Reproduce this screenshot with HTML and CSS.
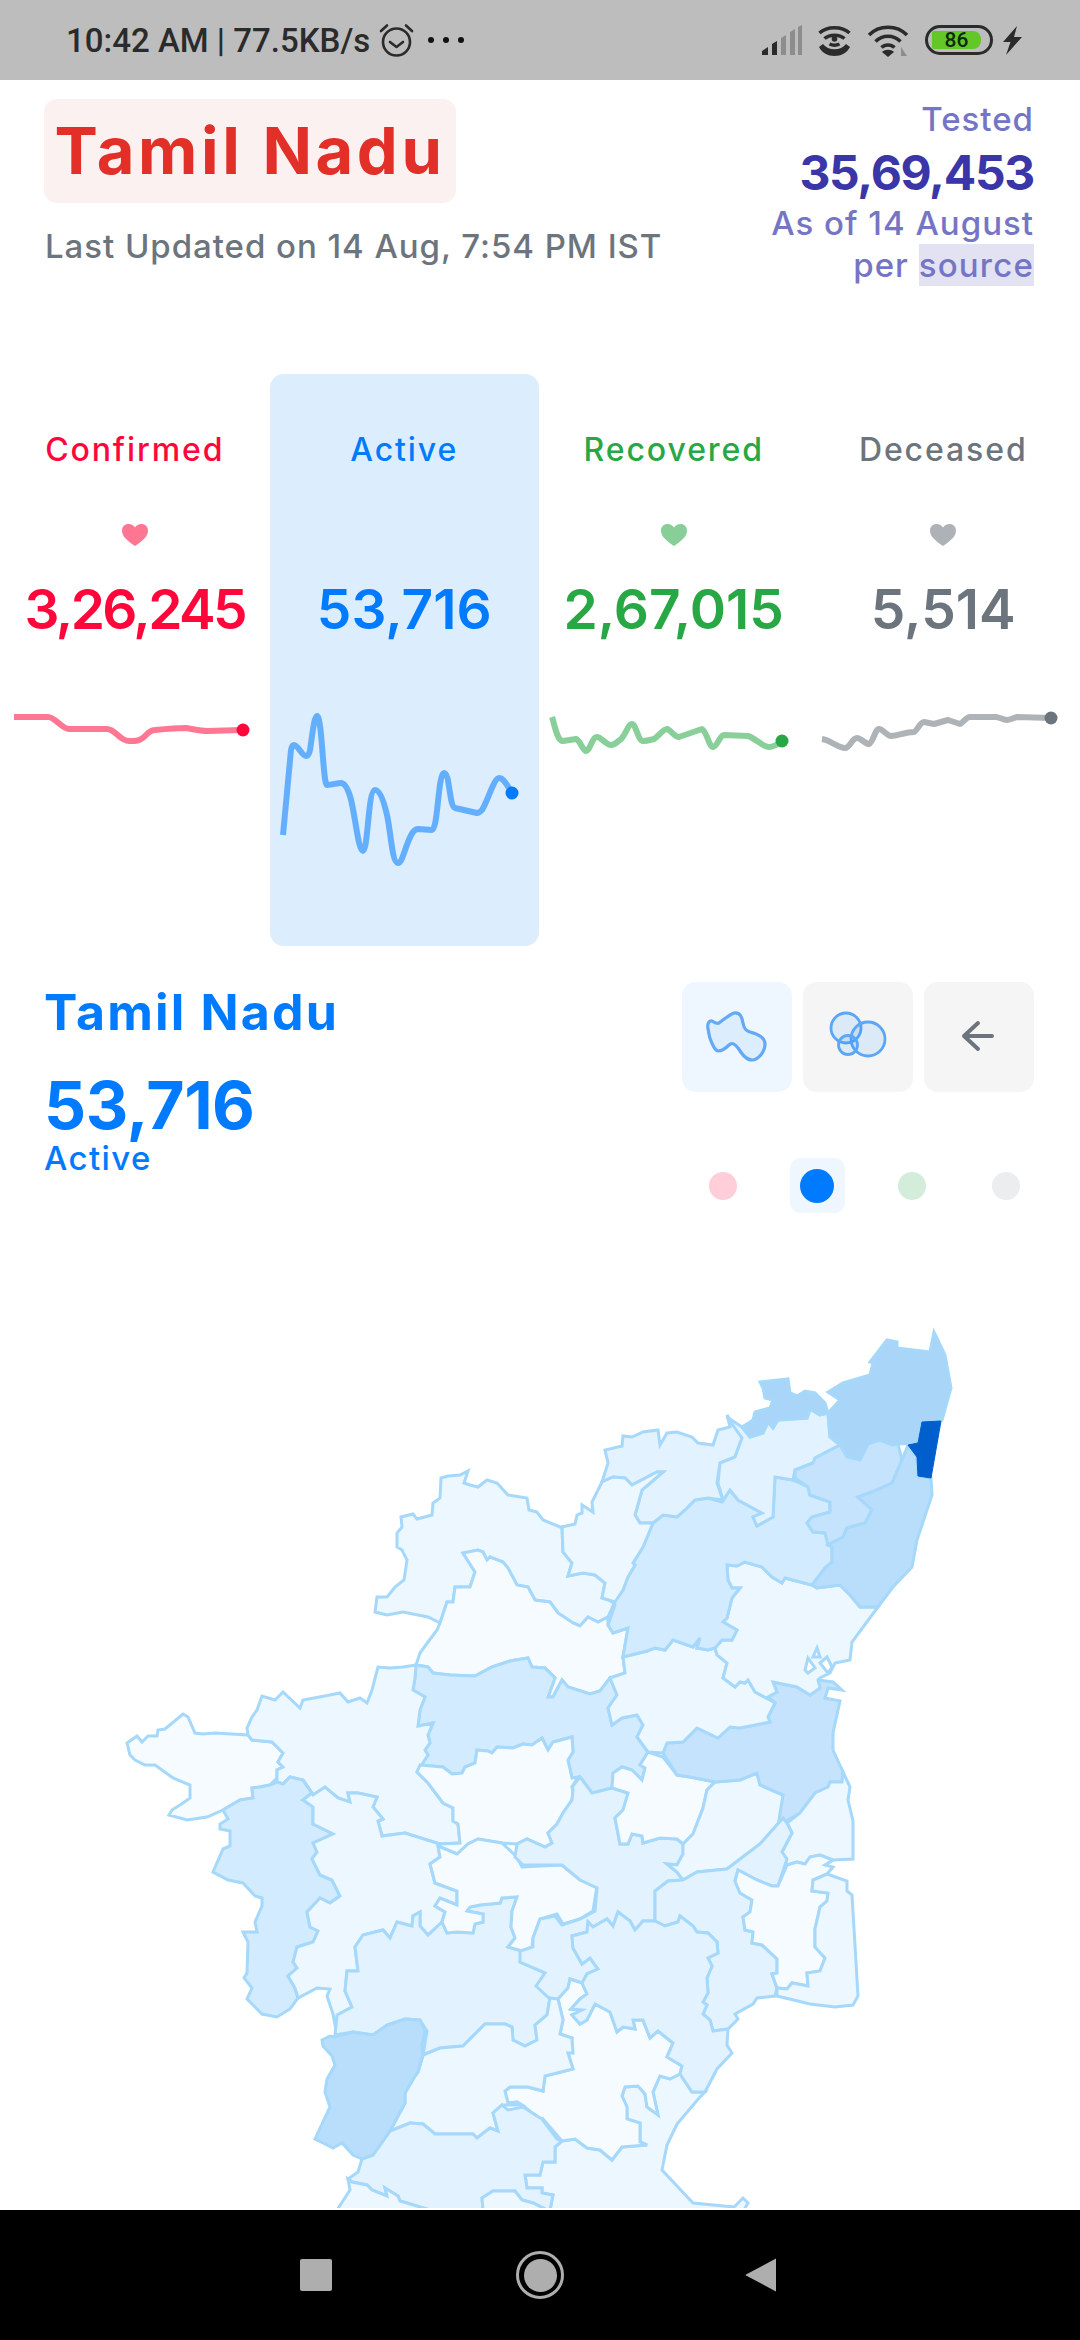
FILE: index.html
```html
<!DOCTYPE html>
<html lang="en">
<head>
<meta charset="utf-8">
<title>Tamil Nadu</title>
<link rel="stylesheet" href="styles.css">
</head>
<body>
<div class="phone">
  <header class="status">
    <div class="status-left">
      <span class="clock">10:42 AM | 77.5KB/s</span>
      <svg class="ico-alarm" viewBox="0 0 35 34"><circle cx="17.500" cy="19" r="13.500"/><path d="M11 19l6.500 5 6.500-5M2 8l6-5.500M33 8l-6-5.500"/></svg>
      <span class="more"><i></i><i></i><i></i></span>
    </div>
    <div class="status-right">
      <svg class="ico-signal" viewBox="0 0 40 30"><path class="on" d="M0 30v-4l6-4v8zM10 30v-11l5-3v14z"/><path class="off" d="M19 30V13l5-3v20zM28 30V7l5-3v26zM36 30V2l4-2v30z"/></svg>
      <svg class="ico-hotspot" viewBox="0 0 33 31"><circle cx="16.500" cy="14" r="2.800"/><path class="ln" d="M1.500 8C9 1 24 1 31.500 8M6.500 13.500c5-4.500 15-4.500 20 0"/><path class="ln" d="M11.500 19c3 1.500 7 1.500 10 0"/><path d="M1 22l4-3c5 7 18 7 23 0l4 3c-3 6-9 9-15.500 9S4 28 1 22z"/></svg>
      <svg class="ico-wifi" viewBox="0 0 42 33"><path class="ln" d="M2 11c10-10.500 28-10.500 38 0M8.500 17.500c7-7 18-7 25 0M14.500 23.500c3.500-3.500 9.500-3.500 13 0"/><path d="M21 33l-6-5c3-3 9-3 12 0z"/><path class="dim" d="M34 32v-9l6 9z"/></svg>
      <span class="battery"><span class="level">86</span></span>
      <svg class="ico-bolt" viewBox="0 0 19 29"><path d="M14 0L0 16h7.500L3 29l16-18h-8z"/></svg>
    </div>
  </header>

  <section class="top">
    <div class="place">
      <h1 class="place-name">Tamil Nadu</h1>
      <p class="updated">Last Updated on 14 Aug, 7:54 PM IST</p>
    </div>
    <div class="tested">
      <div class="tested-label">Tested</div>
      <div class="tested-value">35,69,453</div>
      <div class="tested-note">As of 14 August</div>
      <div class="tested-note">per <span class="source">source</span></div>
    </div>
  </section>

  <section class="stats">
    <div class="stat confirmed">
      <div class="stat-label">Confirmed</div>
      <svg class="heart" viewBox="0 0 26 22"><path d="M13 22C6 17 0 13 0 6.500 0 2.500 3 0 6.500 0 9.500 0 11.500 1.500 13 3.500 14.500 1.500 16.500 0 19.500 0 23 0 26 2.500 26 6.500 26 13 20 17 13 22z"/></svg>
      <div class="stat-value">3,26,245</div>
    </div>
    <div class="stat active">
      <div class="stat-label">Active</div>
      <svg class="heart" viewBox="0 0 26 22"><path d="M13 22C6 17 0 13 0 6.500 0 2.500 3 0 6.500 0 9.500 0 11.500 1.500 13 3.500 14.500 1.500 16.500 0 19.500 0 23 0 26 2.500 26 6.500 26 13 20 17 13 22z" class="hidden-heart"/></svg>
      <div class="stat-value">53,716</div>
    </div>
    <div class="stat recovered">
      <div class="stat-label">Recovered</div>
      <svg class="heart" viewBox="0 0 26 22"><path d="M13 22C6 17 0 13 0 6.500 0 2.500 3 0 6.500 0 9.500 0 11.500 1.500 13 3.500 14.500 1.500 16.500 0 19.500 0 23 0 26 2.500 26 6.500 26 13 20 17 13 22z"/></svg>
      <div class="stat-value">2,67,015</div>
    </div>
    <div class="stat deceased">
      <div class="stat-label">Deceased</div>
      <svg class="heart" viewBox="0 0 26 22"><path d="M13 22C6 17 0 13 0 6.500 0 2.500 3 0 6.500 0 9.500 0 11.500 1.500 13 3.500 14.500 1.500 16.500 0 19.500 0 23 0 26 2.500 26 6.500 26 13 20 17 13 22z"/></svg>
      <div class="stat-value">5,514</div>
    </div>
    <svg class="sparks" viewBox="0 700 1080 180">
      <g class="spark s-confirmed">
        <path d="M14 717L48 717C55 717 62 729 69 729L107 729C115 729 120 741 129 741C136 741 138 741 141 739C146 737 148 730 155 730C165 729 176 728 186 728C193 729 200 731 207 731L243 730"/>
        <circle cx="243" cy="730" r="6.500"/>
      </g>
      <g class="spark s-active">
        <path d="M283 835L291 750C292 745 293 745 294 745C298 745 302 756 306 756C308 756 309 755 310 750C312 738 314 716 317 716C322 716 323 785 327 785C332 785 337 783 341 783C345 783 348 790 350 796C355 812 358 851 363 851C368 851 368 790 375 790C380 790 384 802 387 815C391 833 392 863 398 863C404 863 408 829 418 829L432 830C438 830 438 773 444 773C450 773 449 806 455 808L477 813C479 813 480 812 482 810C487 803 494 778 499 778C504 778 508 787 512 793"/>
        <circle cx="512" cy="793" r="6.500"/>
      </g>
      <g class="spark s-recovered">
        <path d="M552 717C555 726 557 741 563 741L576 739C580 740 583 751 586 751C590 751 592 737 597 737C601 737 606 745 611 745C615 745 618 741 621 739C625 736 628 724 632 724C636 724 638 741 643 741C647 741 650 740 654 739C658 737 663 729 667 729C671 730 674 737 679 737L702 729C707 732 709 747 713 747C717 747 720 735 724 735L748 736C755 738 763 747 769 747C773 747 777 745 782 741"/>
        <circle cx="782" cy="741" r="6.500"/>
      </g>
      <g class="spark s-deceased">
        <path d="M822 739C830 740 838 748 845 748C850 748 852 738 857 738C861 738 865 744 869 744C873 743 875 729 879 729C883 729 887 736 891 736C898 736 905 732 914 732C917 731 920 722 924 722L934 724L948 720L960 724C963 723 966 717 970 717L996 717C999 717 1003 720 1007 720C1010 720 1013 718 1017 717L1051 718"/>
        <circle cx="1051" cy="718" r="6.500"/>
      </g>
    </svg>
  </section>

  <section class="region">
    <div class="region-text">
      <h2 class="region-name">Tamil Nadu</h2>
      <div class="region-value">53,716</div>
      <div class="region-type">Active</div>
    </div>
    <div class="controls">
      <div class="buttons">
        <div class="btn btn-on">
          <svg viewBox="0 0 110 110"><path class="blob" d="M26 47C25 42 27 38 30 39C33 41 35 42 37 41C41 38 47 33 52 31C58 30 60 35 61 41C62 47 64 49 68 50C76 52 83 55 83 62C83 70 76 78 70 78C64 78 60 72 56 66C53 62 50 60 47 63C43 67 39 69 36 69C32 68 31 63 29 59C27 55 27 51 26 47z"/></svg>
        </div>
        <div class="btn">
          <svg viewBox="0 0 110 110"><circle class="ring" cx="43" cy="46" r="15"/><circle class="ring" cx="65" cy="57" r="17"/><circle class="ring" cx="45" cy="63" r="9.500"/></svg>
        </div>
        <div class="btn">
          <svg viewBox="0 0 110 110"><path class="arrow" d="M40 54H68M54 41L40 54L54 67"/></svg>
        </div>
      </div>
      <div class="dots">
        <span class="dot-cell"><i class="dot dot-pink"></i></span>
        <span class="dot-cell dot-cell-on"><i class="dot dot-blue"></i></span>
        <span class="dot-cell"><i class="dot dot-green"></i></span>
        <span class="dot-cell"><i class="dot dot-grey"></i></span>
      </div>
    </div>
  </section>

  <svg class="map" viewBox="0 1300 1080 908">
    <polygon class="d1" points="375,1612 377,1597 387,1597 395,1587 404,1580 407,1560 402,1550 397,1547 397,1533 402,1527 401,1517 413,1514 417,1519 432,1515 433,1503 440,1498 441,1478 448,1476 460,1475 468,1471 464,1483 470,1485 478,1487 487,1480 497,1483 508,1495 527,1498 529,1510 537,1512 543,1520 560,1527 562,1527 563,1552 572,1563 568,1576 583,1573 595,1575 605,1583 602,1598 615,1602 608,1617 598,1622 588,1617 580,1626 573,1623 558,1613 550,1602 535,1600 528,1587 517,1585 508,1568 503,1562 490,1557 487,1560 483,1552 478,1550 463,1553 475,1572 470,1587 455,1587 453,1602 447,1602 440,1623 428,1617 403,1612 387,1615"/>
    <polygon class="d0" points="440,1623 447,1602 453,1602 455,1587 470,1587 475,1572 463,1553 478,1550 483,1552 487,1560 490,1557 503,1562 508,1568 517,1585 528,1587 535,1600 550,1602 558,1613 573,1623 580,1626 588,1617 598,1622 608,1617 608,1625 613,1633 628,1628 623,1657 625,1673 610,1678 600,1691 590,1694 568,1687 562,1680 553,1697 548,1697 555,1678 545,1668 532,1667 528,1658 510,1661 492,1667 475,1676 450,1675 433,1673 428,1667 416,1665 420,1653 428,1642 437,1630"/>
    <polygon class="d3" points="416,1665 428,1667 433,1673 450,1675 475,1676 492,1667 510,1661 528,1658 532,1667 545,1668 555,1678 548,1697 553,1697 562,1680 568,1687 590,1694 600,1691 610,1678 617,1695 608,1708 612,1725 622,1718 637,1715 643,1725 637,1737 648,1752 640,1765 645,1768 642,1780 632,1770 622,1767 613,1773 612,1788 592,1793 580,1777 572,1778 568,1760 573,1752 572,1737 553,1742 548,1750 542,1738 532,1745 523,1744 513,1748 497,1747 492,1753 488,1751 477,1750 475,1763 465,1767 462,1773 452,1774 443,1767 420,1765 428,1755 425,1750 430,1743 428,1735 433,1723 418,1726 420,1710 425,1697 413,1690 415,1678"/>
    <polygon class="d0" points="127,1743 137,1736 142,1742 148,1736 157,1736 158,1730 165,1729 183,1714 188,1717 195,1733 203,1734 215,1733 248,1735 252,1740 272,1742 283,1753 278,1762 283,1767 277,1770 277,1778 270,1785 260,1787 252,1788 253,1798 240,1800 223,1810 207,1817 187,1820 169,1815 172,1810 183,1803 190,1798 190,1785 173,1778 155,1765 145,1765 135,1760 130,1755"/>
    <polygon class="d1" points="248,1735 247,1728 252,1717 257,1710 262,1696 275,1700 283,1692 300,1708 303,1700 330,1695 340,1693 348,1702 360,1698 367,1703 372,1690 378,1667 390,1668 403,1667 416,1665 415,1678 413,1690 425,1697 420,1710 418,1726 433,1723 428,1735 430,1743 425,1750 428,1755 417,1772 428,1783 443,1803 453,1808 453,1821 458,1824 460,1843 440,1844 405,1833 382,1836 378,1821 383,1819 373,1807 377,1797 358,1793 348,1793 350,1802 338,1798 325,1787 313,1795 303,1780 290,1777 283,1784 277,1782 277,1770 283,1767 278,1762 283,1753 272,1742 252,1740"/>
    <polygon class="d0" points="420,1765 443,1767 452,1774 462,1773 465,1767 475,1763 477,1750 488,1751 492,1753 497,1747 513,1748 523,1744 532,1745 542,1738 548,1750 553,1742 572,1737 573,1752 568,1760 572,1778 578,1777 572,1787 573,1790 572,1800 563,1813 557,1824 548,1833 552,1843 545,1847 527,1839 517,1844 502,1843 478,1839 468,1844 457,1854 438,1846 440,1844 460,1843 458,1824 453,1821 453,1808 443,1803 428,1783 417,1772"/>
    <polygon class="d3" points="223,1810 228,1819 220,1824 220,1829 230,1831 230,1846 223,1849 213,1872 228,1880 243,1883 255,1896 262,1898 262,1906 255,1922 257,1932 243,1932 248,1942 247,1973 244,1978 252,1988 247,1999 262,2014 277,2017 290,2009 298,1998 295,1988 288,1976 297,1968 293,1962 297,1947 313,1942 318,1931 310,1927 307,1912 320,1898 330,1903 340,1896 332,1880 320,1875 312,1859 317,1852 313,1843 333,1834 313,1824 313,1807 313,1803 303,1800 312,1793 303,1780 290,1777 283,1784 277,1782 270,1785 260,1787 252,1788 253,1798 240,1800"/>
    <polygon class="d1" points="303,1780 313,1795 325,1787 338,1798 350,1802 348,1793 358,1793 377,1797 373,1807 383,1819 378,1821 382,1836 405,1833 440,1844 438,1846 440,1857 430,1864 435,1883 457,1891 457,1905 440,1898 435,1906 445,1912 442,1922 428,1935 420,1926 420,1912 413,1916 412,1926 397,1922 390,1938 383,1930 363,1935 355,1947 358,1971 347,1971 345,1991 352,2007 340,2014 337,2035 333,2014 327,1996 330,1989 317,1988 298,1998 295,1988 288,1976 297,1968 293,1962 297,1947 313,1942 318,1931 310,1927 307,1912 320,1898 330,1903 340,1896 332,1880 320,1875 312,1859 317,1852 313,1843 333,1834 313,1824 313,1807 303,1800 312,1793"/>
    <polygon class="d2" points="355,1947 363,1935 383,1930 390,1938 397,1922 412,1926 413,1916 420,1912 420,1926 428,1935 442,1922 447,1933 457,1932 473,1933 475,1924 483,1922 483,1914 467,1911 470,1907 480,1905 500,1903 502,1898 517,1897 512,1911 511,1927 515,1938 508,1947 522,1951 520,1962 545,1973 537,1986 550,1998 547,2015 535,2025 537,2040 525,2046 513,2040 512,2027 505,2024 485,2024 463,2046 440,2048 423,2055 427,2031 420,2020 405,2019 387,2025 373,2035 353,2032 335,2035 337,2015 352,2007 345,1991 347,1971 358,1971"/>
    <polygon class="d0" points="438,1846 457,1854 468,1844 478,1839 502,1843 517,1857 522,1867 562,1865 580,1880 597,1886 593,1911 580,1919 563,1924 557,1914 540,1919 533,1938 532,1947 522,1951 508,1947 515,1938 511,1927 512,1911 517,1897 502,1898 500,1903 480,1905 470,1907 467,1911 483,1914 483,1922 475,1924 473,1933 457,1932 447,1933 442,1922 445,1912 435,1906 440,1898 457,1905 457,1891 435,1883 430,1864 440,1857"/>
    <polygon class="d2" points="580,1777 572,1787 573,1790 572,1800 563,1813 557,1824 548,1833 552,1843 545,1847 527,1839 517,1844 515,1857 523,1865 562,1865 580,1880 597,1888 595,1911 580,1919 562,1925 555,1916 540,1919 533,1938 533,1947 520,1951 520,1962 545,1973 536,1986 550,1999 558,1999 568,1988 570,1979 582,1983 587,1974 598,1969 590,1958 582,1964 573,1948 572,1936 587,1932 588,1922 593,1927 607,1919 613,1926 618,1912 630,1921 635,1930 643,1921 655,1921 655,1891 668,1881 683,1880 677,1872 667,1864 677,1865 683,1854 683,1844 677,1839 660,1838 643,1843 642,1836 632,1834 628,1844 620,1844 615,1818 623,1810 628,1800 628,1793 612,1788 592,1793"/>
    <polygon class="d0" points="648,1752 663,1757 677,1775 690,1777 715,1782 707,1790 703,1808 693,1834 683,1844 677,1839 660,1838 643,1843 642,1836 632,1834 628,1844 620,1844 615,1818 623,1810 628,1793 612,1788 613,1773 622,1767 632,1770 642,1780 645,1768 640,1765"/>
    <polygon class="d1" points="683,1854 677,1865 667,1864 677,1872 683,1880 697,1872 727,1869 760,1844 783,1818 783,1795 760,1785 757,1773 740,1780 715,1782 707,1790 703,1808 693,1834 683,1844"/>
    <polygon class="d4" points="663,1753 667,1743 683,1742 697,1728 718,1738 730,1727 740,1728 770,1722 768,1717 775,1703 768,1697 777,1692 773,1682 797,1687 810,1695 820,1688 818,1680 833,1682 842,1690 828,1688 825,1698 840,1701 833,1733 833,1750 843,1772 842,1782 830,1782 828,1787 815,1793 800,1813 778,1826 783,1795 760,1785 757,1773 740,1780 715,1782 690,1777 677,1775"/>
    <polygon class="d1" points="623,1657 647,1651 655,1648 665,1650 673,1640 693,1647 700,1638 697,1648 708,1650 715,1648 717,1655 727,1663 723,1678 735,1687 740,1682 745,1683 748,1680 755,1692 770,1700 775,1703 768,1717 770,1722 740,1728 730,1727 718,1738 697,1728 683,1742 667,1743 663,1753 648,1752 637,1737 643,1725 637,1715 622,1718 612,1725 608,1708 617,1695 610,1678 625,1673"/>
    <polygon class="d1" points="737,1630 723,1622 727,1618 732,1598 740,1588 732,1588 728,1580 727,1565 737,1566 745,1562 762,1567 772,1577 782,1583 785,1578 812,1585 817,1588 840,1585 850,1595 860,1607 878,1607 852,1642 850,1660 835,1663 830,1673 820,1678 818,1680 820,1688 810,1695 797,1687 773,1682 777,1692 768,1697 770,1700 755,1692 748,1680 745,1683 740,1682 735,1687 723,1678 727,1663 717,1655 715,1648 722,1640 732,1640"/>
    <polygon class="hole" points="817,1648 820,1657 813,1657"/>
    <polygon class="hole" points="827,1657 832,1667 828,1673 820,1663"/>
    <polygon class="hole" points="808,1658 815,1668 808,1673 805,1670"/>
    <polygon class="d3" points="653,1523 663,1515 677,1517 685,1510 695,1500 708,1498 722,1502 730,1490 738,1500 762,1513 753,1517 757,1526 773,1517 775,1477 793,1480 808,1487 810,1495 830,1502 830,1512 812,1517 807,1523 813,1532 825,1533 832,1547 832,1562 825,1568 812,1585 785,1578 782,1583 772,1577 762,1567 745,1562 737,1566 727,1565 728,1580 732,1588 740,1588 732,1598 727,1618 723,1622 737,1630 732,1640 722,1640 715,1648 708,1650 697,1648 700,1638 693,1647 673,1640 665,1650 655,1648 647,1651 623,1657 628,1628 613,1633 608,1625 615,1605 612,1602 623,1590 628,1577 635,1565 633,1563 643,1547"/>
    <polygon class="d2" points="602,1482 608,1463 605,1450 622,1446 623,1436 632,1437 643,1432 658,1430 660,1445 667,1433 677,1432 692,1437 698,1443 713,1445 718,1430 730,1427 727,1415 742,1438 735,1457 720,1463 717,1483 723,1500 708,1498 695,1500 685,1510 677,1517 663,1515 653,1523 640,1523 635,1515 642,1490 663,1472 657,1472 632,1485 625,1478 613,1477"/>
    <polygon class="d1" points="562,1527 575,1524 577,1515 582,1513 582,1505 593,1512 592,1502 602,1482 613,1477 625,1478 632,1485 657,1472 663,1472 642,1490 635,1515 640,1523 653,1523 643,1547 633,1563 635,1565 628,1577 623,1590 615,1602 602,1598 605,1583 595,1575 583,1573 568,1576 572,1563 563,1552"/>
    <polygon class="d2" points="727,1417 742,1438 735,1457 720,1463 718,1483 723,1500 730,1490 738,1500 762,1513 753,1517 757,1526 773,1517 775,1477 793,1480 795,1470 813,1463 815,1458 840,1445 830,1437 828,1413 820,1415 810,1409 807,1418 778,1420 773,1428 768,1422 763,1433 750,1437 742,1427"/>
    <polygon class="d5" points="760,1382 788,1379 790,1393 797,1396 805,1391 815,1393 825,1403 828,1413 820,1415 810,1409 807,1418 778,1420 773,1428 768,1422 763,1433 750,1437 742,1427 753,1420 755,1412 770,1408 773,1400 765,1398 763,1388"/>
    <polygon class="d5" points="930,1352 934,1332 945,1355 951,1388 942,1420 922,1422 918,1443 898,1444 892,1445 880,1440 868,1444 860,1460 847,1457 840,1442 830,1437 828,1413 840,1400 828,1392 843,1383 870,1375 873,1363 870,1362 877,1353 887,1340 897,1342 897,1348"/>
    <polygon class="d4" points="795,1470 813,1463 815,1458 840,1445 847,1457 860,1460 868,1444 880,1440 892,1445 898,1444 902,1460 892,1483 872,1492 858,1497 872,1510 865,1523 847,1528 843,1537 828,1545 825,1533 813,1532 807,1523 812,1517 830,1512 830,1502 810,1495 808,1487 795,1478"/>
    <polygon class="d45" points="902,1460 908,1445 917,1457 918,1476 931,1478 932,1495 917,1540 912,1567 893,1587 878,1607 860,1607 850,1595 840,1585 817,1588 812,1585 825,1568 832,1562 832,1547 828,1545 843,1537 847,1528 865,1523 872,1510 858,1497 872,1492 892,1483"/>
    <polygon class="dark" points="922,1422 941,1421 931,1478 918,1476 917,1457 908,1445 918,1443"/>
    <polygon class="d1" points="843,1772 850,1787 848,1800 853,1821 853,1859 833,1860 820,1855 810,1857 805,1864 797,1862 787,1865 782,1852 792,1833 787,1823 800,1813 815,1793 828,1787 830,1782 842,1782"/>
    <polygon class="d2" points="787,1823 792,1833 782,1852 787,1859 778,1886 772,1886 757,1880 738,1870 735,1881 740,1893 752,1900 750,1912 743,1917 745,1930 753,1932 752,1943 762,1945 777,1959 777,1973 772,1974 777,1988 775,1996 757,1998 753,2004 735,2014 738,2019 728,2029 713,2031 710,2020 703,2014 707,2005 703,2002 708,1993 707,1978 712,1966 708,1958 718,1953 717,1942 708,1933 697,1932 693,1926 680,1916 678,1922 665,1926 655,1921 655,1891 668,1881 683,1880 697,1872 727,1869 760,1844 783,1818"/>
    <polygon class="d0" points="738,1870 757,1880 772,1886 778,1886 787,1865 797,1862 805,1864 810,1857 820,1855 833,1860 825,1865 833,1867 827,1874 813,1880 812,1891 828,1893 827,1901 820,1907 815,1929 815,1947 825,1958 820,1971 807,1973 808,1986 792,1983 787,1989 777,1988 772,1974 777,1973 777,1959 762,1945 752,1943 753,1932 745,1930 743,1917 750,1912 752,1900 740,1893 735,1881"/>
    <polygon class="d1" points="827,1874 847,1881 847,1891 852,1895 858,1996 853,2005 835,2007 810,2004 777,1996 777,1988 787,1989 792,1983 808,1986 807,1973 820,1971 825,1958 815,1947 815,1929 820,1907 827,1901 828,1893 812,1891 813,1880"/>
    <polygon class="d1" points="705,2092 692,2092 680,2074 670,2079 660,2076 653,2092 658,2115 647,2107 645,2094 638,2086 625,2087 622,2096 627,2107 627,2119 640,2123 640,2142 647,2145 622,2147 612,2160 600,2150 587,2148 575,2139 562,2141 555,2147 555,2162 543,2162 540,2175 525,2175 527,2188 542,2188 542,2193 553,2195 550,2210 744,2210 748,2203 743,2198 734,2207 693,2203 662,2170 667,2145 677,2124 700,2097"/>
    <polygon class="d0" points="558,1999 563,2020 560,2034 572,2038 568,2053 573,2069 545,2076 543,2091 528,2087 510,2087 505,2091 508,2103 517,2102 522,2105 535,2115 537,2128 543,2119 562,2141 575,2139 587,2148 600,2150 612,2160 622,2147 647,2145 640,2142 640,2123 627,2119 627,2107 622,2096 625,2087 638,2086 645,2094 647,2107 658,2115 653,2092 660,2076 670,2079 680,2074 682,2066 667,2057 673,2043 658,2031 650,2038 643,2020 633,2020 635,2029 623,2027 617,2032 610,2012 595,2004 587,2020 580,2024 572,2015 582,2010 571,2009 580,1999 587,1994 582,1983 570,1979 568,1988"/>
    <polygon class="d2" points="572,1936 587,1932 588,1922 593,1927 607,1919 613,1926 618,1912 630,1921 635,1930 643,1921 655,1921 665,1926 678,1922 680,1916 693,1926 697,1932 708,1933 717,1942 718,1953 708,1958 712,1966 707,1978 708,1993 703,2002 707,2005 703,2014 710,2020 713,2031 728,2029 727,2045 732,2053 717,2069 705,2092 692,2092 680,2074 682,2066 667,2057 673,2043 658,2031 650,2038 643,2020 633,2020 635,2029 623,2027 617,2032 610,2012 595,2004 587,2020 580,2024 572,2015 582,2010 571,2009 580,1999 587,1994 582,1983 587,1974 598,1969 590,1958 582,1964 573,1948"/>
    <polygon class="d1" points="423,2055 440,2048 463,2046 485,2024 505,2024 512,2027 513,2040 525,2046 537,2040 535,2025 547,2015 550,1998 558,1999 563,2020 560,2034 572,2038 573,2053 568,2053 573,2069 545,2076 543,2091 528,2087 510,2087 505,2091 508,2103 517,2102 522,2105 502,2105 493,2113 498,2131 490,2128 477,2138 473,2134 435,2134 423,2124 410,2123 390,2131 405,2103 405,2093 415,2076 418,2072"/>
    <polygon class="d2" points="362,2159 373,2155 390,2131 410,2123 423,2124 435,2134 473,2134 477,2138 490,2128 498,2131 493,2113 502,2105 508,2110 523,2107 537,2116 542,2119 557,2139 562,2141 555,2147 555,2162 543,2162 540,2175 525,2175 527,2188 542,2188 542,2193 553,2195 550,2210 547,2210 533,2203 522,2200 515,2191 493,2191 482,2198 483,2210 430,2210 400,2201 398,2196 385,2188 387,2196 372,2190 367,2185 352,2182 348,2179 358,2172"/>
    <polygon class="d1" points="348,2179 352,2182 367,2185 372,2190 387,2196 385,2188 398,2196 400,2201 430,2210 337,2210 350,2190"/>
    <polygon class="d1" points="483,2210 482,2198 493,2191 515,2191 522,2200 533,2203 547,2210"/>
    <polygon class="d45" points="322,2040 330,2036 335,2037 353,2032 373,2035 387,2025 405,2019 420,2020 425,2031 422,2045 423,2055 418,2072 415,2076 405,2093 405,2103 390,2131 373,2155 362,2159 353,2155 342,2143 333,2148 323,2143 315,2139 330,2107 325,2092 327,2079 335,2065 332,2056 323,2046"/>
  </svg>

  <footer class="nav">
    <span class="nav-square"></span>
    <span class="nav-home"><i></i></span>
    <svg class="nav-back" viewBox="0 0 32 36"><path d="M31 1.500V34.500L1 18.500Q0 18 1 17.500z"/></svg>
  </footer>
</div>
</body>
</html>
```
FILE: styles.css
```css
* { box-sizing: border-box; }
html, body { margin: 0; padding: 0; }
body { background: #fff; font-family: Inter, "Noto Sans", sans-serif; }
.phone { width: 1080px; height: 2340px; display: flex; flex-direction: column; overflow: hidden; background: #fff; }

/* status bar */
.status { height: 80px; flex: none; background: #bdbdbd; display: flex; justify-content: space-between; align-items: center; padding: 0 58px 0 66px; }
.status-left, .status-right { display: flex; align-items: center; }
.clock { font: 500 33px/1 Roboto, sans-serif; color: #2b2b2b; white-space: nowrap; }
.ico-alarm { width: 35px; height: 34px; margin-left: 9px; fill: none; stroke: #2b2b2b; stroke-width: 2.6; stroke-linecap: round; stroke-linejoin: round; }
.more { display: flex; gap: 9px; margin-left: 14px; }
.more i { width: 6px; height: 6px; border-radius: 50%; background: #111; display: block; }
.ico-signal { width: 40px; height: 30px; margin-right: 16px; }
.ico-signal .on { fill: #2b2b2b; }
.ico-signal .off { fill: #8d8d8d; }
.ico-hotspot { width: 33px; height: 31px; margin-right: 16px; fill: #2b2b2b; }
.ico-hotspot .ln, .ico-wifi .ln { fill: none; stroke: #2b2b2b; stroke-width: 3.5; }
.ico-wifi { width: 42px; height: 33px; margin-right: 16px; fill: #2b2b2b; }
.ico-wifi .dim { fill: #8d8d8d; }
.battery { width: 68px; height: 30px; border: 3px solid #2b2b2b; border-radius: 15px; display: flex; align-items: center; padding: 3px; }
.level { width: 49px; height: 18px; margin-left: 1px; background: #63c728; border-radius: 2px 8px 8px 2px; font: 500 21px/18px Roboto, sans-serif; color: #0c2a0c; text-align: center; }
.ico-bolt { width: 19px; height: 29px; margin-left: 10px; fill: #2b2b2b; }

/* top */
.top { flex: none; display: flex; justify-content: space-between; padding: 19px 46px 0 44px; height: 294px; }
.place-name { margin: 0; width: 412px; height: 104px; background: #fbf1f0; border-radius: 13px; color: #e23028; font-size: 65px; font-weight: 700; line-height: 104px; text-align: center; white-space: nowrap; letter-spacing: 3.6px; }
.updated { margin: 22px 0 0 1px; color: #6c757d; font-size: 33px; line-height: 42px; font-weight: 500; white-space: nowrap; letter-spacing: .95px; }
.tested { text-align: right; color: #7575c6; font-size: 33px; line-height: 42px; font-weight: 500; margin-top: -1px; letter-spacing: 1px; }
.tested-label { height: 42px; margin-top: 0; }
.tested-value { color: #3b36a8; font-size: 48px; line-height: 58px; font-weight: 700; letter-spacing: -1.3px; margin-top: 4px; }
.tested-note { height: 42px; }
.source { background: #e3e2f3; display: inline-block; letter-spacing: 1.2px; }

/* stats */
.stats { flex: none; position: relative; display: grid; grid-template-columns: repeat(4, 269.5px); height: 572px; }
.stat { text-align: center; padding-top: 55px; border-radius: 14px; }
.stat-label { font-size: 32px; line-height: 42px; font-weight: 500; letter-spacing: 1.9px; }
.stat-value { font-size: 55px; line-height: 66px; font-weight: 600; margin-top: 30px; letter-spacing: 0; }
.confirmed .stat-value { letter-spacing: -2.6px; }
.heart { display: block; width: 26px; height: 22px; margin: 53px auto 0; opacity: .55; fill: currentColor; }
.hidden-heart { display: none; }
.confirmed { color: #ff073a; }
.active { color: #007bff; background: #dcedfd; }
.recovered { color: #28a745; }
.deceased { color: #6c757d; }
.sparks { position: absolute; left: 0; top: 326px; width: 1080px; height: 180px; pointer-events: none; }
.spark path { fill: none; stroke-width: 6; stroke-linejoin: round; }
.s-confirmed path { stroke: #ff073a; opacity: .55; }
.s-confirmed circle { fill: #ff073a; }
.s-active path { stroke: #007bff; opacity: .55; }
.s-active circle { fill: #007bff; }
.s-recovered path { stroke: #28a745; opacity: .55; }
.s-recovered circle { fill: #28a745; }
.s-deceased path { stroke: #6c757d; opacity: .55; }
.s-deceased circle { fill: #6c757d; }

/* region */
.region { flex: none; display: flex; justify-content: space-between; padding: 36px 46px 0 44px; height: 354px; }
.region-text { color: #007bff; }
.region-name { margin: 0; font-size: 50px; line-height: 60px; font-weight: 700; letter-spacing: 2.2px; white-space: nowrap; }
.region-value { font-size: 66px; line-height: 60px; font-weight: 700; margin-top: 33px; letter-spacing: -.5px; }
.region-type { font-size: 33px; line-height: 36px; font-weight: 500; margin-top: 5px; letter-spacing: 1.4px; }
.buttons { display: flex; gap: 11px; }
.btn { width: 110px; height: 110px; border-radius: 14px; background: #f5f5f5; }
.btn-on { background: #eef7ff; }
.btn svg { display: block; width: 110px; height: 110px; }
.blob { fill: #dcedfd; stroke: #63a9f5; stroke-width: 3.2; }
.ring { fill: rgba(0, 123, 255, .1); stroke: #5ba6f6; stroke-width: 2.8; }
.arrow { fill: none; stroke: #6c757d; stroke-width: 4; stroke-linecap: round; stroke-linejoin: round; }
.dots { display: grid; grid-template-columns: repeat(4, 55px); column-gap: 39.5px; margin-top: 66px; margin-left: 13px; }
.dot-cell { width: 55px; height: 55px; display: flex; align-items: center; justify-content: center; border-radius: 11px; }
.dot-cell-on { background: #eef7ff; }
.dot { display: block; width: 28px; height: 28px; border-radius: 50%; }
.dot-pink { background: #ffced8; }
.dot-blue { width: 34px; height: 34px; background: #007bff; }
.dot-green { background: #d4edda; }
.dot-grey { background: #ebedef; }

/* map */
.map { display: block; flex: none; width: 1080px; height: 908px; margin-top: 0; margin-bottom: 2px; }
.map polygon { stroke: #a5d8fa; stroke-width: 3; stroke-linejoin: miter; }
.d0 { fill: #f5fbff; }
.d1 { fill: #ecf7ff; }
.d2 { fill: #e2f2ff; }
.d3 { fill: #d3ebfe; }
.d4 { fill: #c5e3fc; }
.d45 { fill: #b9defb; }
.d5 { fill: #a8d5f8; }
.hole { fill: #fff; }
.map .dark { fill: #005fcc; stroke: #005fcc; stroke-width: 1; }

/* nav */
.nav { flex: 1; background: #000; position: relative; }
.nav-square { position: absolute; left: 300px; top: 49px; width: 32px; height: 32px; border-radius: 2px; background: #aeaeae; }
.nav-home { position: absolute; left: 516px; top: 41px; width: 48px; height: 48px; border-radius: 50%; border: 3.5px solid #aeaeae; display: flex; align-items: center; justify-content: center; }
.nav-home i { display: block; width: 33px; height: 33px; border-radius: 50%; background: #aeaeae; }
.nav-back { position: absolute; left: 745px; top: 47px; width: 32px; height: 36px; fill: #aeaeae; }
```
